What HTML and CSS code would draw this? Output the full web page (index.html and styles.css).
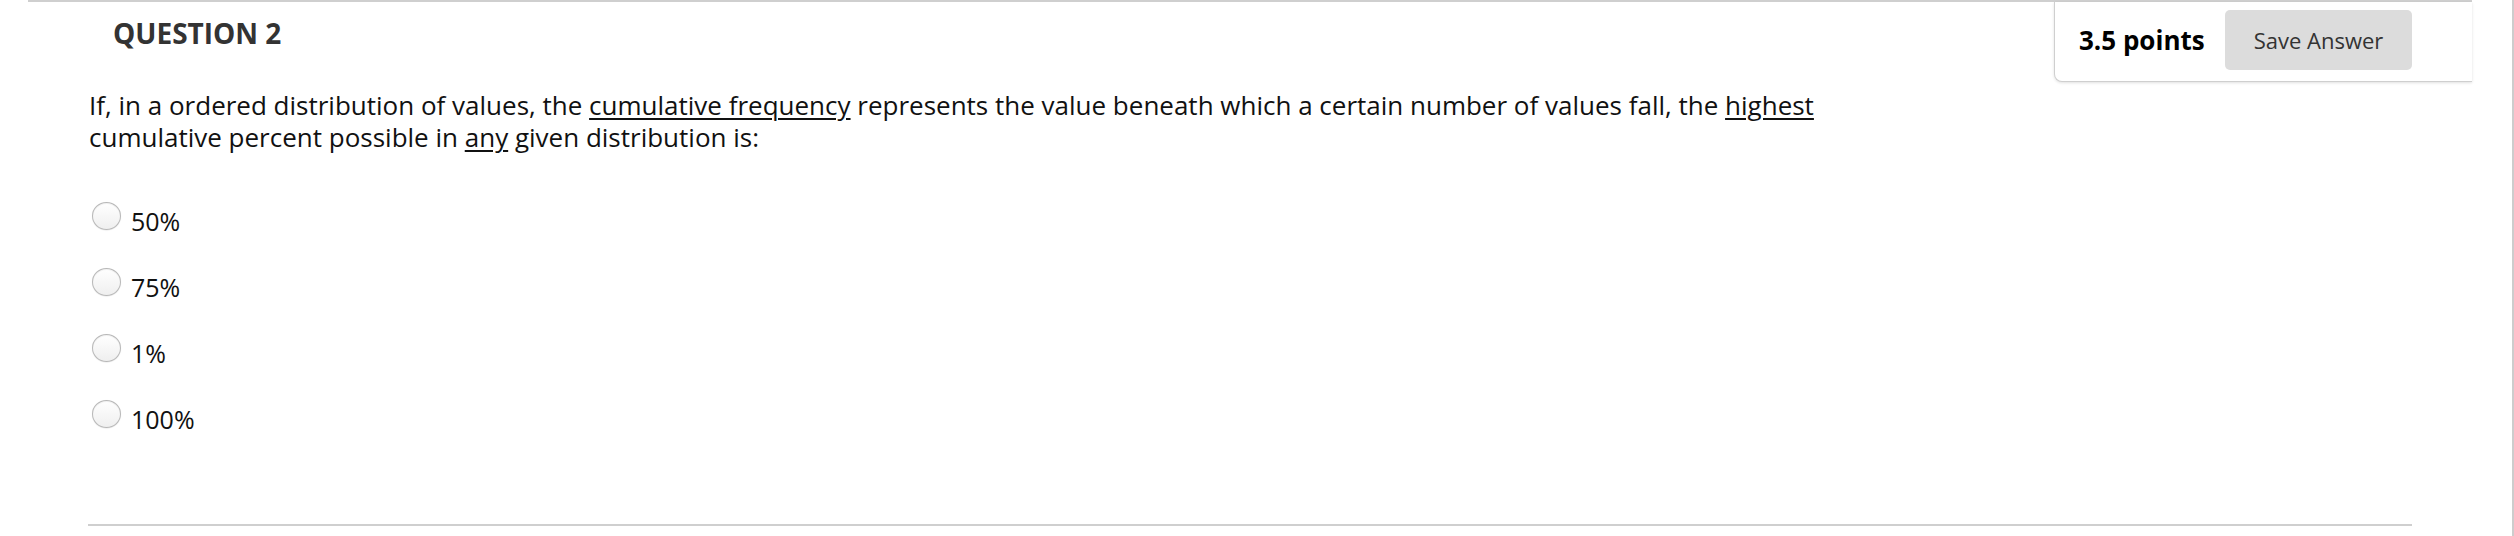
FILE: index.html
```html
<!DOCTYPE html>
<html lang="en">
<head>
<meta charset="utf-8">
<title>Question 2</title>
<link rel="stylesheet" href="styles.css">
</head>
<body>
<div class="page">
  <section class="question">
    <header class="q-header">
      <h2 class="q-title">QUESTION 2</h2>
      <div class="q-meta">
        <span class="q-points">3.5 points</span>
        <button class="save-btn" type="button">Save Answer</button>
      </div>
    </header>
    <p class="q-text">If, in a ordered distribution of values, the <u>cumulative frequency</u> represents the value beneath which a certain number of values fall, the <u>highest</u> cumulative percent possible in <u>any</u> given distribution is:</p>
    <ul class="options">
      <li class="option"><input class="radio" type="radio" name="q2"><span class="opt-label">50%</span></li>
      <li class="option"><input class="radio" type="radio" name="q2"><span class="opt-label">75%</span></li>
      <li class="option"><input class="radio" type="radio" name="q2"><span class="opt-label">1%</span></li>
      <li class="option"><input class="radio" type="radio" name="q2"><span class="opt-label">100%</span></li>
    </ul>
    <div class="q-footer"></div>
  </section>
</div>
</body>
</html>
```
FILE: styles.css
```css
* { box-sizing: border-box; }

html, body {
  margin: 0;
  padding: 0;
  background: #fff;
}

body {
  font-family: "Open Sans", "Liberation Sans", sans-serif;
  color: #111;
}

.page {
  width: 2514px;
  height: 536px;
  border-right: 2px solid #cdcdcd;
  overflow: hidden;
}

.question {
  margin-left: 28px;
  width: 2444px;
  border-top: 2px solid #cfcfcf;
}

.q-header {
  display: flex;
  justify-content: space-between;
  align-items: flex-start;
}

.q-title {
  margin: 12px 0 0 85px;
  font-size: 28px;
  font-weight: 700;
  line-height: normal;
  color: #333;
}

.q-meta {
  display: flex;
  align-items: center;
  width: 418px;
  height: 80px;
  padding: 8px 60px 11px 24px;
  border-left: 1px solid #cfcfcf;
  border-bottom: 1px solid #cfcfcf;
  border-bottom-left-radius: 8px;
  box-shadow: 0 1px 3px rgba(0, 0, 0, 0.12);
  background: #fff;
}

.q-points {
  font-size: 26px;
  font-weight: 700;
  color: #000;
  white-space: nowrap;
}

.save-btn {
  margin-left: auto;
  width: 187px;
  height: 60px;
  padding: 0;
  border: none;
  border-radius: 5px;
  background: #dcdcdc;
  font-family: "Open Sans", "Liberation Sans", sans-serif;
  font-size: 22px;
  color: #333;
}

.q-text {
  margin: 7px 0 0 61px;
  max-width: 1790px;
  font-size: 26px;
  line-height: 32px;
  color: #111;
}

.q-text u {
  text-decoration-thickness: 2px;
  text-underline-offset: 3px;
}

.options {
  list-style: none;
  margin: 47px 0 0 64px;
  padding: 0;
  display: flex;
  flex-direction: column;
  gap: 28px;
}

.option {
  display: flex;
  align-items: flex-start;
  height: 38px;
}

.radio {
  appearance: none;
  -webkit-appearance: none;
  margin: 2px 0 0 0;
  width: 29px;
  height: 28px;
  border-radius: 50%;
  border: 1.5px solid #b8b8b8;
  background: linear-gradient(#ffffff, #efefef);
  box-shadow: inset 0 1px 1px rgba(0, 0, 0, 0.06), 0 0.5px 1px rgba(0, 0, 0, 0.1);
  flex: none;
}

.opt-label {
  margin-left: 10px;
  padding-top: 5px;
  font-size: 25px;
  line-height: 33px;
  color: #111;
}

.q-footer {
  margin: 88px 0 0 60px;
  width: 2324px;
  height: 2px;
  background: #cfcfcf;
}
```
